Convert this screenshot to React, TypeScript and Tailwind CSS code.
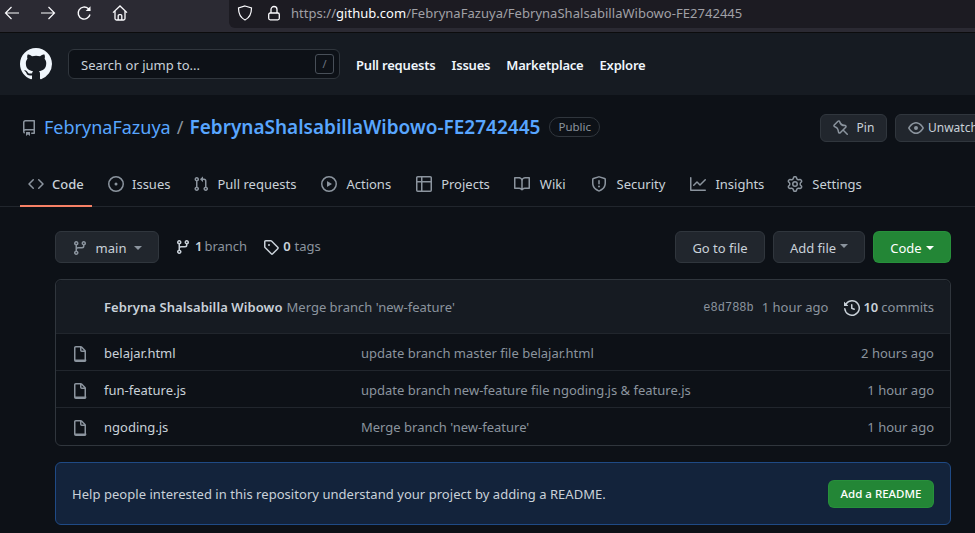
import { ReactNode } from "react";

const paths = {
  repo: "M2 2.5A2.5 2.5 0 014.5 0h8.75a.75.75 0 01.75.75v12.5a.75.75 0 01-.75.75h-2.5a.75.75 0 110-1.5h1.75v-2h-8a1 1 0 00-.714 1.7.75.75 0 01-1.072 1.05A2.495 2.495 0 012 11.5v-9zm10.5-1V9h-8c-.356 0-.694.074-1 .208V2.5a1 1 0 011-1h8zM5 12.25v3.25a.25.25 0 00.4.2l1.45-1.087a.25.25 0 01.3 0L8.6 15.7a.25.25 0 00.4-.2v-3.25a.25.25 0 00-.25-.25h-3.5a.25.25 0 00-.25.25z",
  code: "M4.72 3.22a.75.75 0 011.06 1.06L2.06 8l3.72 3.72a.75.75 0 11-1.06 1.06L.47 8.53a.75.75 0 010-1.06l4.25-4.25zm6.56 0a.75.75 0 10-1.06 1.06L13.94 8l-3.72 3.72a.75.75 0 101.06 1.06l4.25-4.25a.75.75 0 000-1.06l-4.25-4.25z",
  issue: "M8 9.5a1.5 1.5 0 100-3 1.5 1.5 0 000 3zM8 0a8 8 0 100 16A8 8 0 008 0zM1.5 8a6.5 6.5 0 1113 0 6.5 6.5 0 01-13 0z",
  pull: "M7.177 3.073L9.573.677A.25.25 0 0110 .854v4.792a.25.25 0 01-.427.177L7.177 3.427a.25.25 0 010-.354zM3.75 2.5a.75.75 0 100 1.5.75.75 0 000-1.5zm-2.25.75a2.25 2.25 0 113 2.122v5.256a2.251 2.251 0 11-1.5 0V5.372A2.25 2.25 0 011.5 3.25zM11 2.5h-1V4h1a1 1 0 011 1v5.628a2.251 2.251 0 101.5 0V5A2.5 2.5 0 0011 2.5zm1 10.25a.75.75 0 111.5 0 .75.75 0 01-1.5 0zM3.75 12a.75.75 0 100 1.5.75.75 0 000-1.5z",
  play: "M1.5 8a6.5 6.5 0 1113 0 6.5 6.5 0 01-13 0zM8 0a8 8 0 100 16A8 8 0 008 0zM6.379 5.227A.25.25 0 006 5.442v5.117a.25.25 0 00.379.214l4.264-2.559a.25.25 0 000-.428L6.379 5.227z",
  table: "M0 1.75C0 .784.784 0 1.75 0h12.5C15.216 0 16 .784 16 1.75v12.5A1.75 1.75 0 0114.25 16H1.75A1.75 1.75 0 010 14.25V1.75zM1.5 6.5v7.75c0 .138.112.25.25.25H5v-8H1.5zM5 5H1.5V1.75a.25.25 0 01.25-.25H5V5zm1.5 1.5v8h7.75a.25.25 0 00.25-.25V6.5h-8zm8-1.5h-8V1.5h7.75a.25.25 0 01.25.25V5z",
  book: "M0 1.75A.75.75 0 01.75 1h4.253c1.227 0 2.317.59 3 1.501A3.744 3.744 0 0111.006 1h4.245a.75.75 0 01.75.75v10.5a.75.75 0 01-.75.75h-4.507a2.25 2.25 0 00-1.591.659l-.622.621a.75.75 0 01-1.06 0l-.622-.621A2.25 2.25 0 005.258 13H.75a.75.75 0 01-.75-.75V1.75zm8.755 3a2.25 2.25 0 012.25-2.25H14.5v9h-3.757c-.71 0-1.4.201-1.992.572l.004-7.322zm-1.504 7.324l.004-5.073-.002-2.253A2.25 2.25 0 005.003 2.5H1.5v9h3.757a3.75 3.75 0 011.994.574z",
  shield: "M7.467.133a1.75 1.75 0 011.066 0l5.25 1.68A1.75 1.75 0 0115 3.48V7c0 1.566-.32 3.182-1.303 4.682-.983 1.498-2.585 2.813-5.032 3.855a1.7 1.7 0 01-1.33 0c-2.447-1.042-4.049-2.357-5.032-3.855C1.32 10.182 1 8.566 1 7V3.48a1.75 1.75 0 011.217-1.667l5.25-1.68zm.61 1.429a.25.25 0 00-.153 0l-5.25 1.68a.25.25 0 00-.174.238V7c0 1.358.275 2.666 1.057 3.86.784 1.194 2.121 2.34 4.366 3.297a.2.2 0 00.154 0c2.245-.956 3.582-2.104 4.366-3.298C13.225 9.666 13.5 8.36 13.5 7V3.48a.25.25 0 00-.174-.237l-5.25-1.68zM9 10.5a1 1 0 11-2 0 1 1 0 012 0zm-.25-5.75a.75.75 0 10-1.5 0v3a.75.75 0 001.5 0v-3z",
  graph: "M1.5 1.75a.75.75 0 00-1.5 0v12.5c0 .414.336.75.75.75h14.5a.75.75 0 000-1.5H1.5V1.75zm14.28 2.53a.75.75 0 00-1.06-1.06L10 7.94 7.53 5.47a.75.75 0 00-1.06 0L3.22 8.72a.75.75 0 001.06 1.06L7 7.06l2.47 2.47a.75.75 0 001.06 0l5.25-5.25z",
  gear: "M7.429 1.525a6.593 6.593 0 011.142 0c.036.003.108.036.137.146l.289 1.105c.147.56.55.967.997 1.189.174.086.341.183.501.29.417.278.97.423 1.53.27l1.102-.303c.11-.03.175.016.195.046.219.31.41.641.573.989.014.031.022.11-.059.19l-.815.806c-.411.406-.562.957-.53 1.456a4.588 4.588 0 010 .582c-.032.499.119 1.05.53 1.456l.815.806c.08.08.073.159.059.19a6.494 6.494 0 01-.573.99c-.02.029-.086.074-.195.045l-1.103-.303c-.559-.153-1.112-.008-1.529.27-.16.107-.327.204-.5.29-.449.222-.851.628-.998 1.189l-.289 1.105c-.029.11-.101.143-.137.146a6.613 6.613 0 01-1.142 0c-.036-.003-.108-.037-.137-.146l-.289-1.105c-.147-.56-.55-.967-.997-1.189a4.502 4.502 0 01-.501-.29c-.417-.278-.97-.423-1.53-.27l-1.102.303c-.11.03-.175-.016-.195-.046a6.492 6.492 0 01-.573-.989c-.014-.031-.022-.11.059-.19l.815-.806c.411-.406.562-.957.53-1.456a4.587 4.587 0 010-.582c.032-.499-.119-1.05-.53-1.456l-.815-.806c-.08-.08-.073-.159-.059-.19a6.44 6.44 0 01.573-.99c.02-.029.086-.075.195-.045l1.103.303c.559.153 1.112.008 1.529-.27.16-.107.327-.204.5-.29.449-.222.851-.628.998-1.189l.289-1.105c.029-.11.101-.143.137-.146zM8 0c-.236 0-.47.01-.701.03-.743.065-1.29.615-1.458 1.261l-.29 1.106c-.017.066-.078.158-.211.224a5.994 5.994 0 00-.668.386c-.123.082-.233.09-.3.071L3.27 2.776c-.644-.177-1.392.02-1.82.63a7.977 7.977 0 00-.704 1.217c-.315.675-.111 1.422.363 1.891l.815.806c.05.048.098.147.088.294a6.084 6.084 0 000 .772c.01.147-.038.246-.088.294l-.815.806c-.474.469-.678 1.216-.363 1.891.2.428.436.835.704 1.218.428.609 1.176.806 1.82.63l1.103-.303c.066-.019.176-.011.299.071.213.143.436.272.668.386.133.066.194.158.212.224l.289 1.106c.169.646.715 1.196 1.458 1.26a8.094 8.094 0 001.402 0c.743-.064 1.29-.614 1.458-1.26l.29-1.106c.017-.066.078-.158.211-.224a5.98 5.98 0 00.668-.386c.123-.082.233-.09.3-.071l1.102.302c.644.177 1.392-.02 1.82-.63.268-.382.505-.789.704-1.217.315-.675.111-1.422-.364-1.891l-.814-.806c-.05-.048-.098-.147-.088-.294a6.1 6.1 0 000-.772c-.01-.147.039-.246.088-.294l.814-.806c.475-.469.679-1.216.364-1.891a7.992 7.992 0 00-.704-1.218c-.428-.609-1.176-.806-1.82-.63l-1.103.303c-.066.019-.176.011-.299-.071a5.991 5.991 0 00-.668-.386c-.133-.066-.194-.158-.212-.224L10.16 1.29C9.99.645 9.444.095 8.701.031A8.094 8.094 0 008 0zm1.5 8a1.5 1.5 0 11-3 0 1.5 1.5 0 013 0zM11 8a3 3 0 11-6 0 3 3 0 016 0z",
  branch: "M11.75 2.5a.75.75 0 100 1.5.75.75 0 000-1.5zm-2.25.75a2.25 2.25 0 113 2.122V6A2.5 2.5 0 0110 8.5H6a1 1 0 00-1 1v1.128a2.251 2.251 0 11-1.5 0V5.372a2.25 2.25 0 111.5 0v1.836A2.492 2.492 0 016 7h4a1 1 0 001-1v-.628A2.25 2.25 0 019.5 3.25zM4.25 12a.75.75 0 100 1.5.75.75 0 000-1.5zM3.5 3.25a.75.75 0 111.5 0 .75.75 0 01-1.5 0z",
  tag: "M2.5 7.775V2.75a.25.25 0 01.25-.25h5.025a.25.25 0 01.177.073l6.25 6.25a.25.25 0 010 .354l-5.025 5.025a.25.25 0 01-.354 0l-6.25-6.25a.25.25 0 01-.073-.177zm-1.5 0V2.75C1 1.784 1.784 1 2.75 1h5.025c.464 0 .91.184 1.238.513l6.25 6.25a1.75 1.75 0 010 2.474l-5.026 5.026a1.75 1.75 0 01-2.474 0l-6.25-6.25A1.75 1.75 0 011 7.775zM6 5a1 1 0 100 2 1 1 0 000-2z",
  history: "M1.643 3.143L.427 1.927A.25.25 0 000 2.104V5.75c0 .138.112.25.25.25h3.646a.25.25 0 00.177-.427L2.715 4.215a6.5 6.5 0 11-1.18 4.458.75.75 0 10-1.493.154 8.001 8.001 0 101.6-5.684zM7.75 4a.75.75 0 01.75.75v2.992l2.028.812a.75.75 0 01-.557 1.392l-2.5-1A.75.75 0 017 8.25v-3.5A.75.75 0 017.75 4z",
  file: "M3.75 1.5a.25.25 0 00-.25.25v11.5c0 .138.112.25.25.25h8.5a.25.25 0 00.25-.25V6H9.75A1.75 1.75 0 018 4.25V1.5H3.75zm5.75.56v2.19c0 .138.112.25.25.25h2.19L9.5 2.06zM2 1.75C2 .784 2.784 0 3.75 0h5.086c.464 0 .909.184 1.237.513l3.414 3.414c.329.328.513.773.513 1.237v8.086A1.75 1.75 0 0112.25 16h-8.5A1.75 1.75 0 012 14.25V1.75z",
  pin: "M4.456.734a1.75 1.75 0 012.826.504l.613 1.327a3.081 3.081 0 002.084 1.707l2.454.584c1.332.317 1.8 1.972.832 2.94L11.06 10l3.72 3.72a.75.75 0 11-1.061 1.06L10 11.06l-2.204 2.205c-.968.968-2.623.5-2.94-.832l-.584-2.454a3.081 3.081 0 00-1.707-2.084l-1.327-.613a1.75 1.75 0 01-.504-2.826L4.456.734zM5.92 1.866a.25.25 0 00-.404-.072L1.794 5.516a.25.25 0 00.072.404l1.328.613A4.582 4.582 0 015.73 9.63l.584 2.454a.25.25 0 00.42.12l5.47-5.47a.25.25 0 00-.12-.42L9.63 6.13a4.581 4.581 0 01-3.098-2.537L5.92 1.866z",
  eye: "M1.679 7.932c.412-.621 1.242-1.75 2.366-2.717C5.175 4.242 6.527 3.5 8 3.5c1.473 0 2.824.742 3.955 1.715 1.124.967 1.954 2.096 2.366 2.717a.119.119 0 010 .136c-.412.621-1.242 1.75-2.366 2.717C10.825 11.758 9.473 12.5 8 12.5c-1.473 0-2.824-.742-3.955-1.715C2.92 9.818 2.09 8.69 1.679 8.068a.119.119 0 010-.136zM8 2c-1.981 0-3.67.992-4.933 2.078C1.797 5.169.88 6.423.43 7.1a1.619 1.619 0 000 1.798c.45.678 1.367 1.932 2.637 3.024C4.329 13.008 6.019 14 8 14c1.981 0 3.67-.992 4.933-2.078 1.27-1.091 2.187-2.345 2.637-3.023a1.619 1.619 0 000-1.798c-.45-.678-1.367-1.932-2.637-3.023C11.671 2.992 9.981 2 8 2zm0 8a2 2 0 100-4 2 2 0 000 4z",
  github: "M8 0C3.58 0 0 3.58 0 8c0 3.54 2.29 6.53 5.47 7.59.4.07.55-.17.55-.38 0-.19-.01-.82-.01-1.49-2.01.37-2.53-.49-2.69-.94-.09-.23-.48-.94-.82-1.13-.28-.15-.68-.52-.01-.53.63-.01 1.08.58 1.23.82.72 1.21 1.87.87 2.33.66.07-.52.28-.87.51-1.07-1.78-.2-3.64-.89-3.64-3.95 0-.87.31-1.59.82-2.15-.08-.2-.36-1.02.08-2.12 0 0 .67-.21 2.2.82.64-.18 1.32-.27 2-.27.68 0 1.36.09 2 .27 1.53-1.04 2.2-.82 2.2-.82.44 1.1.16 1.92.08 2.12.51.56.82 1.27.82 2.15 0 3.07-1.87 3.75-3.65 3.95.29.25.54.73.54 1.48 0 1.07-.01 1.93-.01 2.2 0 .21.15.46.55.38A8.013 8.013 0 0016 8c0-4.42-3.58-8-8-8z",
};

function Octicon(props: { name: keyof typeof paths; className: string }) {
  return (
    <svg viewBox="0 0 16 16" fill="currentColor" className={props.className + " shrink-0"}>
      <path fillRule="evenodd" d={paths[props.name]} />
    </svg>
  );
}

function Caret(props: { className?: string }) {
  return (
    <span
      className={
        "inline-block w-0 h-0 border-x-[4px] border-x-transparent border-t-[4px] " +
        (props.className ?? "border-t-[#8b949e]")
      }
    />
  );
}

function Button(props: { children: ReactNode; className?: string }) {
  return (
    <div
      className={
        "rounded-md border border-[#30363d] bg-[#21262d] text-[#c9d1d9] flex items-center justify-center " +
        (props.className ?? "h-[32px]")
      }
    >
      {props.children}
    </div>
  );
}

function BrowserBar() {
  return (
    <div className="h-[33px] bg-[#2b2a33] border-b border-[#0c0c0d] flex items-start">
      <div className="w-[229px] h-[28px] flex items-center pl-[4px] pb-[2px] gap-[20px] text-[#fbfbfe]">
        <svg viewBox="0 0 16 16" className="w-[16px] h-[16px]" fill="none" stroke="currentColor" strokeWidth="1.2">
          <path d="M15 8H1.5M7.5 2 1.5 8l6 6" />
        </svg>
        <svg viewBox="0 0 16 16" className="w-[16px] h-[16px]" fill="none" stroke="currentColor" strokeWidth="1.2">
          <path d="M1 8h13.5M8.5 2l6 6-6 6" />
        </svg>
        <svg viewBox="0 0 16 16" className="w-[16px] h-[16px]" fill="none" stroke="currentColor" strokeWidth="1.4">
          <path d="M14 9.500A6 6 0 1 1 12.200 3.600L14 5.400" />
          <path d="M14.500 1.200v4.800H9.700" fill="currentColor" stroke="none" />
        </svg>
        <svg viewBox="0 0 16 16" className="w-[16px] h-[16px]" fill="none" stroke="currentColor" strokeWidth="1.3">
          <path d="M1 7.600 8 1l7 6.600M3 6v7.500a1.500 1.500 0 0 0 1.500 1.500h7a1.500 1.500 0 0 0 1.500-1.500V6M6.200 15v-4.200a1.200 1.200 0 0 1 1.200-1.200h1.200a1.200 1.200 0 0 1 1.200 1.200V15" />
        </svg>
      </div>
      <div className="flex-1 h-[28px] bg-[#1c1b22] rounded-bl-md flex items-center pl-[8px] pb-[2px] text-[#fbfbfe]">
        <svg viewBox="0 0 16 16" className="w-[16px] h-[16px]" fill="none" stroke="currentColor" strokeWidth="1.200">
          <path d="M8 1 14.500 3c0 5.500-1.500 9.500-6.500 12C3 12.500 1.500 8.500 1.500 3Z" />
        </svg>
        <svg viewBox="0 0 16 16" className="w-[16px] h-[16px] ml-[13px]" fill="none" stroke="currentColor" strokeWidth="1.300">
          <path d="M5 8V4.500a3 3 0 0 1 6 0V8" />
          <rect x="2.700" y="8" width="10.600" height="6.800" rx="1.500" />
        </svg>
        <span className="ml-[9px] pt-[2px] text-[13px] tracking-[0.03px] text-[#a0a0a6]">
          https://<span className="text-[#fbfbfe]">github.com</span>/FebrynaFazuya/FebrynaShalsabillaWibowo-FE2742445
        </span>
      </div>
    </div>
  );
}

function TopNav() {
  return (
    <div className="h-[62px] bg-[#161b22] flex items-center pl-[20px]">
      <Octicon name="github" className="w-[32px] h-[32px] text-[#f0f6fc]" />
      <div className="ml-[16px] w-[272px] h-[30px] rounded-md border border-[#30363d] bg-[#0d1117] flex items-center justify-between pl-[12px] pr-[5px]">
        <span className="pt-[3px] text-[13px] text-[#c9d1d9]">Search or jump to...</span>
        <span className="w-[19px] h-[20px] rounded-[3px] border border-[#484f58] text-[#6e7681] text-[11px] flex items-center justify-center">
          /
        </span>
      </div>
      <div className="ml-[16px] pt-[4px] flex gap-[16px] text-[13px] tracking-[-0.2px] font-semibold text-[#f0f6fc]">
        <span>Pull requests</span>
        <span>Issues</span>
        <span>Marketplace</span>
        <span>Explore</span>
      </div>
    </div>
  );
}

function RepoHead() {
  return (
    <div className="h-[64px] flex items-center pl-[21px] pt-[1px] whitespace-nowrap">
      <Octicon name="repo" className="w-[16px] h-[16px] text-[#8b949e]" />
      <span className="ml-[7px] text-[18px] text-[#58a6ff]">FebrynaFazuya</span>
      <span className="mx-[6px] text-[18px] text-[#8b949e]">/</span>
      <span className="text-[19px] font-semibold text-[#58a6ff]">FebrynaShalsabillaWibowo-FE2742445</span>
      <span className="ml-[9px] mb-[1px] h-[20px] px-[8px] rounded-full border border-[#30363d] text-[11.5px] text-[#8b949e] flex items-center">
        Public
      </span>
      <div className="ml-auto -mr-[20px] flex gap-[8px]">
        <Button className="w-[67px] h-[28px] gap-[8px] text-[12px]">
          <Octicon name="pin" className="w-[16px] h-[16px] text-[#8b949e]" />
          Pin
        </Button>
        <Button className="w-[100px] h-[28px] gap-[4px] text-[12px] justify-start pl-[12px]">
          <Octicon name="eye" className="w-[16px] h-[16px] text-[#8b949e]" />
          Unwatch
        </Button>
      </div>
    </div>
  );
}

const tabs: { name: keyof typeof paths; label: string; cls: string }[] = [
  { name: "issue", label: "Issues", cls: "ml-[16px] gap-[8px]" },
  { name: "pull", label: "Pull requests", cls: "ml-[23px] gap-[8px]" },
  { name: "play", label: "Actions", cls: "ml-[25px] gap-[9px]" },
  { name: "table", label: "Projects", cls: "ml-[25px] gap-[9px]" },
  { name: "book", label: "Wiki", cls: "ml-[24px] gap-[10px]" },
  { name: "shield", label: "Security", cls: "ml-[25px] gap-[10px]" },
  { name: "graph", label: "Insights", cls: "ml-[25px] gap-[9px]" },
  { name: "gear", label: "Settings", cls: "ml-[23px] gap-[9px]" },
];

function Tabs() {
  return (
    <div className="h-[48px] border-b border-[#21262d] flex items-start pl-[20px] text-[13px] text-[#c9d1d9]">
      <div className="h-[48px] w-[72px] border-b-2 border-[#f78166] flex items-center pl-[8px] pt-[3px] gap-[8px]">
        <Octicon name="code" className="w-[16px] h-[16px] text-[#8b949e]" />
        <span className="font-medium pt-[2px]">Code</span>
      </div>
      <div className="flex items-center h-[46px] pt-[4px]">
        {tabs.map((t) => (
          <div key={t.label} className={"flex items-center " + t.cls}>
            <Octicon name={t.name} className="w-[16px] h-[16px] text-[#8b949e]" />
            <span className="pt-[2px]">{t.label}</span>
          </div>
        ))}
      </div>
    </div>
  );
}

function Toolbar() {
  return (
    <div className="flex items-center justify-between h-[32px] mt-[24px] text-[13px]">
      <div className="flex items-center">
        <Button className="w-[104px] h-[32px] pt-[2px] gap-[8px]">
          <Octicon name="branch" className="w-[16px] h-[16px] text-[#8b949e]" />
          <span className="pt-[2px]">main</span>
          <Caret />
        </Button>
        <div className="ml-[16px] flex items-center pb-[1px] text-[#8b949e]">
          <Octicon name="branch" className="w-[16px] h-[16px] text-[#c9d1d9]" />
          <span className="ml-[4px] font-semibold text-[#c9d1d9]">1</span>
          <span className="ml-[2px]">branch</span>
          <Octicon name="tag" className="ml-[16px] w-[16px] h-[16px] text-[#c9d1d9]" />
          <span className="ml-[4px] font-semibold text-[#c9d1d9]">0</span>
          <span className="ml-[4px]">tags</span>
        </div>
      </div>
      <div className="flex items-center gap-[8px]">
        <Button className="w-[90px] h-[32px] pt-[3px]">Go to file</Button>
        <Button className="w-[92px] h-[32px] gap-[4px]">
          <span className="pt-[3px]">Add file</span>
          <Caret className="border-t-[#8b949e] mb-[3px]" />
        </Button>
        <div className="h-[32px] w-[78px] rounded-md bg-[#238636] border border-[#2ea043]/40 text-white flex items-center justify-center gap-[4px]">
          <span className="pt-[3px]">Code</span>
          <Caret className="border-t-white mt-[2px]" />
        </div>
      </div>
    </div>
  );
}

const files = [
  { name: "belajar.html", msg: "update branch master file belajar.html", age: "2 hours ago" },
  { name: "fun-feature.js", msg: "update branch new-feature file ngoding.js & feature.js", age: "1 hour ago" },
  { name: "ngoding.js", msg: "Merge branch 'new-feature'", age: "1 hour ago" },
];

function FileBox() {
  return (
    <div className="mt-[16px] rounded-md border border-[#30363d] text-[13px]">
      <div className="h-[53px] bg-[#161b22] rounded-t-md flex items-center pl-[48px] pr-[16px] pt-[3px]">
        <span className="font-semibold tracking-[0.08px] text-[#c9d1d9]">Febryna Shalsabilla Wibowo</span>
        <span className="ml-[4px] text-[#8b949e]">Merge branch 'new-feature'</span>
        <span className="ml-auto font-['Liberation_Mono',monospace] text-[12px] text-[#8b949e]">e8d788b</span>
        <span className="ml-[8px] text-[#8b949e]">1 hour ago</span>
        <Octicon name="history" className="ml-[16px] w-[16px] h-[16px] text-[#c9d1d9]" />
        <span className="ml-[3px] font-semibold text-[#c9d1d9]">10</span>
        <span className="ml-[3px] text-[#8b949e]">commits</span>
      </div>
      {files.map((f) => (
        <div key={f.name} className="h-[37px] last:h-[38px] border-t border-[#21262d] flex items-center pl-[16px] pr-[16px] pt-[4px] last:pt-[3px]">
          <Octicon name="file" className="w-[16px] h-[16px] text-[#8b949e]" />
          <span className="ml-[16px] w-[257px] text-[#c9d1d9]">{f.name}</span>
          <span className="text-[#8b949e]">{f.msg}</span>
          <span className="ml-auto text-[#8b949e]">{f.age}</span>
        </div>
      ))}
    </div>
  );
}

function ReadmeBanner() {
  return (
    <div className="mt-[16px] h-[63px] rounded-md border border-[#1f4a85] bg-[#13233b] flex items-center justify-between pl-[16px] pr-[16px] text-[13px] text-[#c9d1d9]">
      <span className="pt-[2px] tracking-[0.04px]">
        Help people interested in this repository understand your project by adding a README.
      </span>
      <div className="w-[106px] h-[28px] rounded-md bg-[#238636] border border-[#2ea043]/40 text-white text-[11.5px] font-medium flex items-center justify-center">
        Add a README
      </div>
    </div>
  );
}

export default function App() {
  return (
    <div className="w-[975px] h-[533px] overflow-hidden bg-[#0d1117] font-['Noto_Sans',sans-serif]">
      <BrowserBar />
      <TopNav />
      <RepoHead />
      <Tabs />
      <div className="pl-[55px] pr-[24px]">
        <Toolbar />
        <FileBox />
        <ReadmeBanner />
      </div>
    </div>
  );
}
